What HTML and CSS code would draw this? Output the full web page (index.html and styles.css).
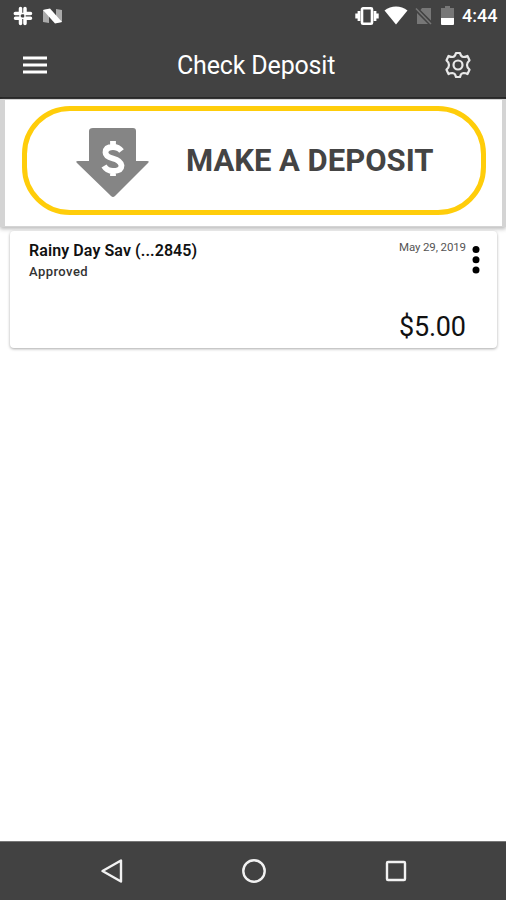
FILE: index.html
```html
<!DOCTYPE html>
<html lang="en">
<head>
<meta charset="utf-8">
<title>Check Deposit</title>
<link rel="stylesheet" href="styles.css">
</head>
<body>
<header class="header">
  <div class="status">
    <svg class="slack" width="20" height="20" viewBox="0 0 20 20" fill="none" stroke="#fff" stroke-width="3.5" stroke-linecap="round"><path d="M7.500 2.500V7M2.300 7.500H7M12 2.500V7M13 7.500H17.500M2.500 12.200H7M7.500 13V17.500M13 12.200H17.500M12 13V17.500"/><path d="M7 7.500h5v4.700H7z" stroke-width="1.500"/></svg>
    <svg class="nougat" width="20" height="16" viewBox="0 0 20 16"><path fill="#aaa" d="M0 2l6-1v14l-6-1zM13 1l6 1v12l-6 1z"/><path fill="#fff" d="M0 2L7 .5 19 14l-7 1.500z"/></svg>
    <span class="spacer"></span>
    <svg class="vibrate" width="24" height="18" viewBox="0 0 24 18"><rect x="7" y="1.3" width="10" height="15.4" rx="1" fill="none" stroke="#fff" stroke-width="2.6"/><path d="M4 4v10M20 4v10M1.700 6.500v5M22.300 6.500v5" stroke="#fff" stroke-width="2.8"/></svg>
    <svg class="wifi" width="24" height="19" viewBox="0 0 24 19"><path fill="#fff" d="M.5 4.500C7-.8 17-.8 23.500 4.500L12 18.500z"/></svg>
    <svg class="sim" width="18" height="18" viewBox="0 0 18 18"><path fill="#777" d="M7 1h9v12.500L5.500 3zM2 6l11 11H2z"/><path d="M1 1.500l15 15.500" stroke="#777" stroke-width="1.500"/></svg>
    <svg class="battery" width="13" height="19" viewBox="0 0 13 19"><path fill="#777" d="M4 0h5v2h4v11H0V2h4z"/><path fill="#fff" d="M0 12h13v6q0 1-1 1H1q-1 0-1-1z"/></svg>
    <span class="clock">4:44</span>
  </div>
  <div class="toolbar">
    <svg class="menu" width="24" height="19" viewBox="0 0 24 19"><path d="M0 2h24M0 9h24M0 16h24" stroke="#fff" stroke-width="2.800"/></svg>
    <h1>Check Deposit</h1>
    <svg class="gear" width="26" height="28" viewBox="0 0 26 28" fill="none" stroke="#e8e8e8" stroke-width="2.200" stroke-linejoin="round"><path d="M11 2h4q.8 3.800 3.500 4Q21 6 22.500 5l2 4.300q-2.500 2-2.500 4.700t2.500 4.700l-2 4.300q-1.500-1-4-1-2.700.2-3.500 4h-4q-.8-3.800-3.500-4-2.500 0-4 1l-2-4.300Q4 16.700 4 14T1.500 9.300l2-4.300q1.500 1 4 1Q10.200 5.800 11 2z"/><circle cx="13" cy="14" r="4.500"/></svg>
  </div>
</header>
<main>
  <section class="banner">
    <button class="deposit">
      <svg class="arrow" width="74" height="71" viewBox="0 0 74 71"><path fill="#858585" d="M17 1h40q3 0 3 3v30h11q3 0 1 2L39 69q-2 2-4 0L1 36q-2-2 1-2h11V4q0-3 4-3z"/><path d="M45.500 24q-3-4-8.500-4-7.500 0-7.500 5.500 0 4 7.500 6t8.500 7q0 5.500-8.500 5.500-6 0-9-5M37 14v6M37 43v6" fill="none" stroke="#fff" stroke-width="5.800"/></svg>
      <span>MAKE A DEPOSIT</span>
    </button>
  </section>
  <article class="card">
    <div class="info"><h2>Rainy Day Sav (...2845)</h2><p class="state">Approved</p></div>
    <div class="side"><time>May 29, 2019</time><strong>$5.00</strong></div>
    <svg class="more" width="8" height="30" viewBox="0 0 8 30"><circle cx="4" cy="4.500" r="3.500"/><circle cx="4" cy="14.700" r="3.500"/><circle cx="4" cy="25" r="3.500"/></svg>
  </article>
</main>
<nav class="nav">
  <svg width="24" height="26" viewBox="0 0 24 26"><path d="M21 2.500v21L2.500 13z"/></svg>
  <svg width="26" height="26" viewBox="0 0 26 26"><circle cx="13" cy="13" r="10.700"/></svg>
  <svg width="24" height="26" viewBox="0 0 24 26"><rect x="3" y="4" width="18" height="18" rx="1"/></svg>
</nav>
</body>
</html>
```

FILE: styles.css
```css
* { box-sizing: border-box; margin: 0; padding: 0; }
body { height: 900px; display: flex; flex-direction: column; background: #fff; font-family: Roboto, "Liberation Sans", sans-serif; color: #111; overflow: hidden; }
svg { display: block; flex: none; }
.header { height: 99px; background: #424242; color: #fff; border-bottom: 2px solid #222; }
.status { height: 31px; display: flex; align-items: center; padding: 0 9px 0 13px; }
.nougat { margin-left: 10px; }
.spacer { flex: 1; }
.wifi { margin-left: 5px; }
.sim { margin-left: 7px; }
.battery { margin-left: 8px; }
.clock { width: 35px; margin-left: 8px; font-size: 18px; font-weight: 500; white-space: nowrap; }
.toolbar { height: 66px; display: flex; align-items: center; padding: 2px 35px 0 23px; }
.toolbar h1 { margin-left: 130px; font-size: 25px; font-weight: 400; letter-spacing: -0.16px; white-space: nowrap; }
.gear { margin-left: auto; }
.banner { height: 128px; padding: 6px 17px 0; border: solid #d4d4d4; border-width: 1px 4px 1px 5px; box-shadow: 0 2px 4px #bbb; }
.deposit { width: 464px; height: 109px; display: flex; align-items: center; padding: 4px 0 0 49px; border: 5px solid #ffcd0a; border-radius: 48px; background: #fff; color: #444; }
.deposit span { margin: -4px 0 0 36px; font: 700 31px Roboto, sans-serif; white-space: nowrap; }
.card { height: 117px; margin: 4px 9px 0 10px; display: flex; padding: 10px 17px 0 19px; border-radius: 4px; background: #fff; box-shadow: 0 1px 3px #aaa; }
.info { flex: 1; }
.card h2 { font-size: 16px; line-height: 20px; font-weight: 600; letter-spacing: 0.09px; }
.state { padding-top: 1px; font-size: 13px; line-height: 20px; font-weight: 500; letter-spacing: 0.45px; color: #333; }
.side { width: 68px; display: flex; flex-direction: column; }
.side time { font-size: 11.500px; line-height: 13px; letter-spacing: -0.12px; color: #555; white-space: nowrap; }
.side strong { margin-top: 57px; font-size: 27px; line-height: 32px; font-weight: 400; letter-spacing: -0.2px; white-space: nowrap; }
.more { margin: 4px 0 0 5px; }
.nav { height: 59px; margin-top: auto; display: flex; align-items: center; justify-content: space-between; padding: 0 98px 0 100px; background: #424242; border-top: 1px solid #777; }
.nav svg { fill: none; stroke: #f2f2f2; stroke-width: 2.400; stroke-linejoin: round; }
```
